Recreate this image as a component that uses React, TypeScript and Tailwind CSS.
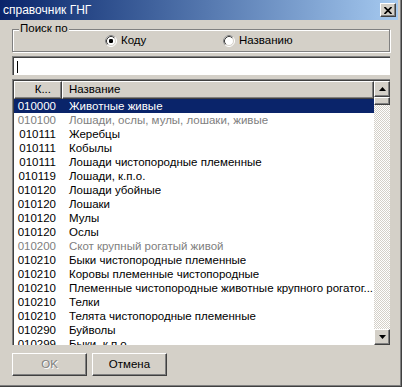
const rows: { code: string; name: string; gray?: boolean }[] = [
  { code: "010000", name: "Животные живые" },
  { code: "010100", name: "Лошади, ослы, мулы, лошаки, живые", gray: true },
  { code: "010111", name: "Жеребцы" },
  { code: "010111", name: "Кобылы" },
  { code: "010111", name: "Лошади чистопородные племенные" },
  { code: "010119", name: "Лошади, к.п.о." },
  { code: "010120", name: "Лошади убойные" },
  { code: "010120", name: "Лошаки" },
  { code: "010120", name: "Мулы" },
  { code: "010120", name: "Ослы" },
  { code: "010200", name: "Скот крупный рогатый живой", gray: true },
  { code: "010210", name: "Быки чистопородные племенные" },
  { code: "010210", name: "Коровы племенные чистопородные" },
  { code: "010210", name: "Племенные чистопородные животные крупного рогатог..." },
  { code: "010210", name: "Телки" },
  { code: "010210", name: "Телята чистопородные племенные" },
  { code: "010290", name: "Буйволы" },
  { code: "010299", name: "Быки, к.п.о." },
];

function Radio({ checked }: { checked?: boolean }) {
  return (
    <svg width="12" height="12" viewBox="0 0 12 12" className="shrink-0">
      <circle cx="6" cy="6" r="5" fill="#fff" />
      <circle cx="6" cy="6" r="5.5" fill="none" stroke="#fff" />
      <path d="M2.11 9.89 A5.5 5.5 0 0 1 9.89 2.11" fill="none" stroke="#808080" />
      <circle cx="6" cy="6" r="4.5" fill="none" stroke="#d4d0c8" />
      <path d="M2.82 9.18 A4.5 4.5 0 0 1 9.18 2.82" fill="none" stroke="#404040" />
      {checked && <rect x="4" y="4" width="4" height="4" rx="1.2" fill="#000" />}
    </svg>
  );
}

function Arrow({ down }: { down?: boolean }) {
  return (
    <svg width="7" height="4" viewBox="0 0 7 4">
      <polygon points={down ? "0,0 7,0 3.5,4" : "3.5,0 7,4 0,4"} fill="#000" />
    </svg>
  );
}

const raised =
  "border-t border-l border-t-white border-l-white border-b border-r border-b-[#404040] border-r-[#404040] shadow-[inset_-1px_-1px_0_#808080] bg-[#d4d0c8]";

export default function App() {
  return (
    <div className="w-[402px] h-[387px] bg-[#d4d0c8] border-r border-b border-[#404040] overflow-hidden font-['Liberation_Sans',Arial,sans-serif] text-[11.5px] text-black">
      <div className="h-full border-r border-b border-[#808080] flex flex-col">
        {/* Title bar */}
        <div className="h-[20px] mr-[2px] flex items-center pl-[3px] pr-[2px] bg-gradient-to-r from-[#0a246a] to-[#a6caf0]">
          <span className="text-white text-[12px] leading-none">справочник ГНГ</span>
          <div className={`ml-auto w-[16px] h-[14px] flex items-center justify-center ${raised}`}>
            <svg width="8" height="7" viewBox="0 0 8 7">
              <path d="M0.5 0 L7.5 7 M7.5 0 L0.5 7" stroke="#000" strokeWidth="1.7" />
            </svg>
          </div>
        </div>

        <div className="pl-[12px] pr-[10px] flex flex-col">
          {/* Search group */}
          <div className="relative mt-[9px] h-[23px] border border-[#808080] shadow-[inset_1px_1px_0_#fff,1px_1px_0_#fff]">
            <span className="absolute left-[6px] top-[-8px] px-[1px] leading-[13px] bg-[#d4d0c8]">Поиск по</span>
            <div className="h-full flex items-center pl-[92px]">
              <div className="w-[118px] flex items-center gap-[4px]">
                <Radio checked />
                <span className="leading-[13px]">Коду</span>
              </div>
              <div className="flex items-center gap-[4px]">
                <Radio />
                <span className="leading-[13px]">Названию</span>
              </div>
            </div>
          </div>

          {/* Input */}
          <div className="mt-[4px] h-[19px] border-t border-l border-[#808080] border-b-white border-r-white">
            <div className="h-full border-t border-l border-[#404040] border-b-[#d4d0c8] border-r-[#d4d0c8] bg-white flex items-center pl-[3px]">
              <div className="w-[1px] h-[12px] bg-black" />
            </div>
          </div>

          {/* List */}
          <div className="mt-[4px] h-[266px] border-t border-l border-[#808080] border-b-white border-r-white">
            <div className="h-full border-t border-l border-[#404040] border-b-[#d4d0c8] border-r-[#d4d0c8] bg-white flex">
              <div className="flex-1 flex flex-col overflow-hidden">
                <div className="h-[18px] flex shrink-0">
                  <div className={`w-[48px] flex items-center justify-end pr-[10px] ${raised}`}>К...</div>
                  <div className={`flex-1 flex items-center pl-[6px] ${raised}`}>Название</div>
                </div>
                {rows.map((r, i) => (
                  <div
                    key={i}
                    className={`h-[14px] shrink-0 flex items-center leading-[14px] whitespace-nowrap ${
                      i === 0 ? "bg-[#0a246a] text-white" : r.gray ? "text-[#808080]" : ""
                    }`}
                  >
                    <div className="w-[48px] text-right pr-[6px]">{r.code}</div>
                    <div className="pl-[7px] overflow-hidden">{r.name}</div>
                  </div>
                ))}
              </div>
              <div className="w-[16px] flex flex-col">
                <div className={`h-[16px] flex items-center justify-center ${raised}`}>
                  <Arrow />
                </div>
                <div className={`h-[8px] ${raised}`} />
                <div className="flex-1 bg-[repeating-conic-gradient(#d4d0c8_0%_25%,#ffffff_0%_50%)] bg-[length:2px_2px]" />
                <div className={`h-[16px] flex items-center justify-center ${raised}`}>
                  <Arrow down />
                </div>
              </div>
            </div>
          </div>

          {/* Buttons */}
          <div className="mt-[8px] flex gap-[5px]">
            <div className={`w-[75px] h-[23px] flex items-center justify-center text-[#808080] [text-shadow:1px_1px_0_#fff] ${raised}`}>
              OK
            </div>
            <div className={`w-[75px] h-[23px] flex items-center justify-center ${raised}`}>Отмена</div>
          </div>
        </div>
      </div>
    </div>
  );
}
